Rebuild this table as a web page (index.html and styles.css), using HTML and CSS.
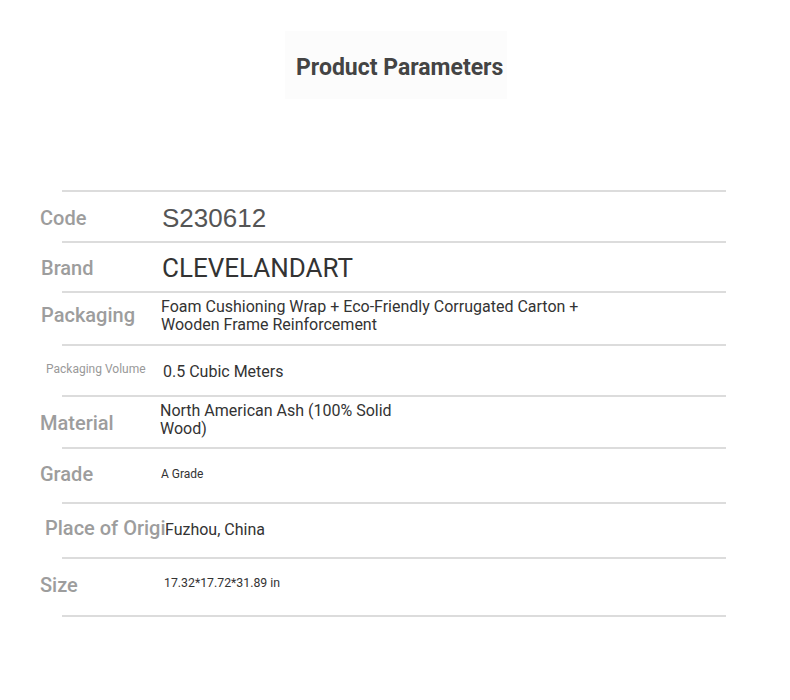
FILE: index.html
```html
<!DOCTYPE html>
<html lang="en">
<head>
<meta charset="utf-8">
<title>Product Parameters</title>
<link rel="stylesheet" href="styles.css">
</head>
<body>
<div class="page">
  <div class="title-wrap"><h1 class="title">Product Parameters</h1></div>
  <div class="params">
    <div class="rule"></div>
    <div class="row row-code">
      <div class="label">Code</div>
      <div class="value v-code">S230612</div>
    </div>
    <div class="rule"></div>
    <div class="row row-brand">
      <div class="label">Brand</div>
      <div class="value v-brand">CLEVELANDART</div>
    </div>
    <div class="rule"></div>
    <div class="row row-pack">
      <div class="label l-pack">Packaging</div>
      <div class="value v-pack">Foam Cushioning Wrap + Eco-Friendly Corrugated Carton + Wooden Frame Reinforcement</div>
    </div>
    <div class="rule"></div>
    <div class="row row-vol">
      <div class="label l-vol">Packaging Volume</div>
      <div class="value v-vol">0.5 Cubic Meters</div>
    </div>
    <div class="rule"></div>
    <div class="row row-mat">
      <div class="label">Material</div>
      <div class="value v-mat">North American Ash (100% Solid Wood)</div>
    </div>
    <div class="rule"></div>
    <div class="row row-grade">
      <div class="label">Grade</div>
      <div class="value v-grade">A Grade</div>
    </div>
    <div class="rule"></div>
    <div class="row row-origin">
      <div class="label l-origin">Place of Origin</div>
      <div class="value v-origin">Fuzhou, China</div>
    </div>
    <div class="rule"></div>
    <div class="row row-size">
      <div class="label">Size</div>
      <div class="value v-size">17.32*17.72*31.89 in</div>
    </div>
    <div class="rule"></div>
  </div>
</div>
</body>
</html>
```

FILE: styles.css
```css
* { box-sizing: border-box; }
html, body { margin: 0; padding: 0; background: #fff; }
body { font-family: Roboto, "Liberation Sans", Arial, sans-serif; }

.page { width: 790px; height: 700px; }

.title-wrap {
  display: flex;
  justify-content: center;
  padding-top: 31px;
  height: 190px;
}
.title {
  margin: 0 0 0 2px;
  width: 222px;
  height: 68px;
  display: flex;
  align-items: center;
  padding-left: 11px;
  padding-top: 4px;
  background: #fcfcfc;
  font-size: 23px;
  font-weight: 700;
  color: #444;
  white-space: nowrap;
}

.params { padding-left: 40px; }

.rule {
  margin-left: 22px;
  width: 664px;
  height: 2px;
  background: #dcdcdc;
}

.row {
  display: flex;
  align-items: center;
}
.row-code { height: 49px; }
.row-brand { height: 48px; }
.row-pack { height: 51px; }
.row-vol { height: 49px; }
.row-mat { height: 50px; }
.row-grade { height: 53px; }
.row-origin { height: 53px; }
.row-size { height: 56px; }

.label {
  width: 122px;
  flex: none;
  font-size: 20px;
  font-weight: 500;
  color: #9d9d9d;
  white-space: nowrap;
  overflow: hidden;
}
.row-code .label { margin-top: 3px; }
.row-brand .label { margin-top: 2px; padding-left: 1px; }
.l-pack { padding-left: 1px; margin-top: -8px; }
.l-vol { font-size: 12px; padding-left: 6px; margin-top: -4px; color: #999; font-weight: 400; }
.row-mat .label { margin-top: 1px; }
.row-grade .label { margin-top: -4px; }
.l-origin { padding-left: 5px; width: 125px; margin-top: -6px; }
.row-size .label { margin-top: -4px; }

.value { color: #333; }
.v-code {
  font-family: "Liberation Sans", Arial, sans-serif;
  font-size: 26px;
  color: #555;
  margin-top: 3px;
}
.v-brand { font-size: 26px; color: #333; margin-top: 2px; }
.v-pack {
  font-size: 16px;
  line-height: 18px;
  width: 440px;
  margin-left: -1px;
  margin-top: -5px;
}
.v-vol { font-size: 16px; margin-left: 1px; margin-top: 2px; }
.v-mat {
  font-size: 16px;
  line-height: 18px;
  width: 250px;
  margin-left: -2px;
  margin-top: -5px;
}
.v-grade { font-size: 12px; margin-left: -1px; margin-top: -4px; }
.v-origin { font-size: 16px; margin-top: -2px; }
.v-size { font-size: 12.3px; margin-left: 2px; margin-top: -8px; }
```
